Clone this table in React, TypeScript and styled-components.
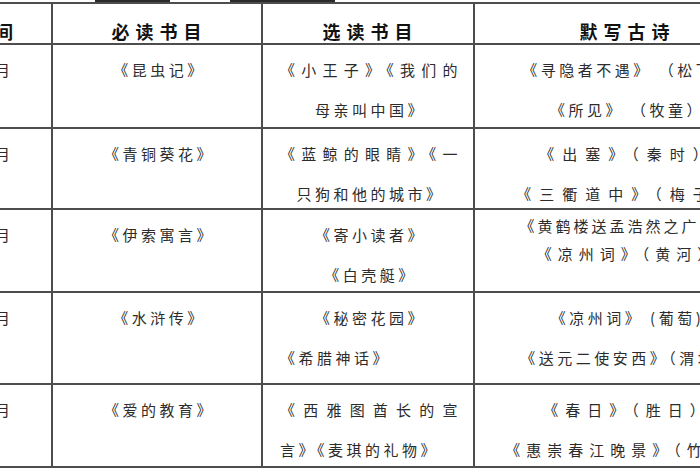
import styled, { createGlobalStyle } from "styled-components";

const GlobalStyle = createGlobalStyle`
  html, body {
    margin: 0;
    padding: 0;
    background: #ffffff;
  }
  body {
    font-family: "Noto Sans CJK SC", "Noto Sans", sans-serif;
    overflow: hidden;
  }
`;

type Line = {
  t: string;
  fill?: boolean;
  sp?: number;
  align?: "left" | "center";
};

type Row = {
  month: string;
  must: Line[];
  pick: Line[];
  poem: Line[];
  h: number;
  tight?: boolean;
};

const rows: Row[] = [
  {
    month: "三月",
    must: [{ t: "《昆虫记》" }],
    pick: [{ t: "《小王子》《我们的", fill: true }, { t: "母亲叫中国》" }],
    poem: [{ t: "《寻隐者不遇》 （松下）" }, { t: "《所见》 （牧童）" }],
    h: 84,
  },
  {
    month: "四月",
    must: [{ t: "《青铜葵花》" }],
    pick: [
      { t: "《蓝鲸的眼睛》《一", fill: true },
      { t: "只狗和他的城市》" },
    ],
    poem: [{ t: "《出塞》（秦时）", sp: 8 }, { t: "《三衢道中》（梅子）", sp: 8 }],
    h: 81,
  },
  {
    month: "五月",
    must: [{ t: "《伊索寓言》" }],
    pick: [{ t: "《寄小读者》" }, { t: "《白壳艇》" }],
    poem: [{ t: "《黄鹤楼送孟浩然之广陵》", sp: 3 }, { t: "《凉州词》（黄河）", sp: 6 }],
    h: 83,
    tight: true,
  },
  {
    month: "六月",
    must: [{ t: "《水浒传》" }],
    pick: [{ t: "《秘密花园》" }, { t: "《希腊神话》", align: "left" }],
    poem: [{ t: "《凉州词》 (葡萄)" }, { t: "《送元二使安西》（渭城）" }],
    h: 92,
  },
  {
    month: "七月",
    must: [{ t: "《爱的教育》" }],
    pick: [
      { t: "《西雅图酋长的宣", fill: true },
      { t: "言》《麦琪的礼物》", align: "left" },
    ],
    poem: [{ t: "《春日》（胜日）", sp: 7 }, { t: "《惠崇春江晚景》（竹外）", sp: 6 }],
    h: 83,
  },
];

const Page = styled.div`
  width: 700px;
  height: 470px;
  overflow: hidden;
  background: #fff;
`;

const TopStrip = styled.div`
  display: flex;
  gap: 60px;
  height: 2px;
  padding-left: 95px;
`;

const Bar = styled.div<{ $w: number }>`
  width: ${(p) => p.$w}px;
  height: 2px;
  background: #2a2a2a;
`;

const Table = styled.div`
  display: grid;
  grid-template-columns: 119px 210px 212px 302px;
  margin-left: -66px;
  width: max-content;
  border-top: 2px solid #4d4d4d;
`;

const Cell = styled.div<{ $h: number; $tight?: boolean }>`
  box-sizing: border-box;
  height: ${(p) => p.$h}px;
  border-right: 2px solid #4d4d4d;
  border-bottom: 2px solid #4d4d4d;
  padding: ${(p) => (p.$tight ? 2 : 5)}px 12px 0 17px;
  overflow: hidden;
`;

const HeadCell = styled(Cell)`
  padding-top: 15px;
  text-align: center;
  font-weight: 700;
  font-size: 18px;
  line-height: 24px;
  letter-spacing: 6px;
  color: #111111;
`;

const TextLine = styled.div<{ $fill?: boolean; $sp?: number; $align?: string; $tight?: boolean }>`
  font-size: 15px;
  line-height: ${(p) => (p.$tight ? 28 : 40)}px;
  color: #2c2c2c;
  white-space: nowrap;
  letter-spacing: ${(p) => p.$sp ?? 3.5}px;
  text-align: ${(p) => (p.$fill ? "justify" : p.$align ?? "center")};
  text-align-last: ${(p) => (p.$fill ? "justify" : p.$align ?? "center")};
`;

const Lines = ({ lines, tight }: { lines: Line[]; tight?: boolean }) => (
  <>
    {lines.map((l, i) => (
      <TextLine key={i} $fill={l.fill} $sp={l.sp} $align={l.align} $tight={tight}>
        {l.t}
      </TextLine>
    ))}
  </>
);

const App = () => {
  return (
    <Page>
      <GlobalStyle />
      <TopStrip>
        <Bar $w={75} />
        <Bar $w={105} />
      </TopStrip>
      <Table>
        {["时间", "必读书目", "选读书目", "默写古诗"].map((h) => (
          <HeadCell key={h} $h={41}>
            {h}
          </HeadCell>
        ))}
        {rows.map((r) => (
          <>
            <Cell key={r.month + "m"} $h={r.h}>
              <Lines lines={[{ t: r.month, sp: 4 }]} />
            </Cell>
            <Cell key={r.month + "a"} $h={r.h}>
              <Lines lines={r.must} />
            </Cell>
            <Cell key={r.month + "b"} $h={r.h}>
              <Lines lines={r.pick} />
            </Cell>
            <Cell key={r.month + "c"} $h={r.h} $tight={r.tight}>
              <Lines lines={r.poem} tight={r.tight} />
            </Cell>
          </>
        ))}
      </Table>
    </Page>
  );
};

export default App;
